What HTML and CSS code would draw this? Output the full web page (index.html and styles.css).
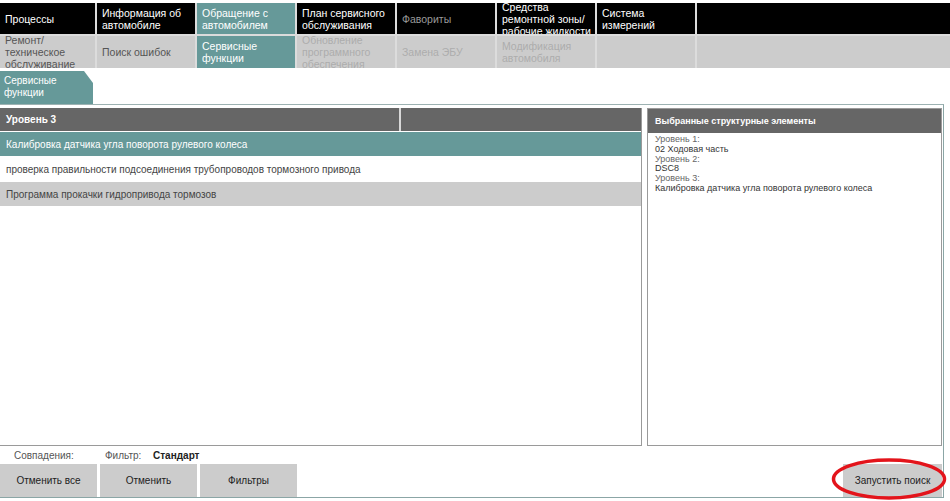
FILE: index.html
```html
<!DOCTYPE html>
<html lang="ru">
<head>
<meta charset="utf-8">
<title>Сервисные функции</title>
<link rel="stylesheet" href="styles.css">
</head>
<body>
<div class="nav">
  <div class="cell top">Процессы</div>
  <div class="cell top">Информация об автомобиле</div>
  <div class="cell top active">Обращение с автомобилем</div>
  <div class="cell top">План сервисного обслуживания</div>
  <div class="cell top muted">Фавориты</div>
  <div class="cell top lines">Средства<br>ремонтной зоны/<br>рабочие жидкости</div>
  <div class="cell top">Система измерений</div>
  <div class="cell top"></div>

  <div class="cell sub">Ремонт/ техническое обслуживание</div>
  <div class="cell sub">Поиск ошибок</div>
  <div class="cell sub active">Сервисные функции</div>
  <div class="cell sub off">Обновление программного обеспечения</div>
  <div class="cell sub off">Замена ЭБУ</div>
  <div class="cell sub off">Модификация автомобиля</div>
  <div class="cell sub"></div>
  <div class="cell sub"></div>
</div>

<div class="tabs">
  <div class="tab">Сервисные<br>функции</div>
</div>

<div class="frame">
  <div class="panels">
    <div class="left">
      <div class="thead">
        <div class="th">Уровень 3</div>
        <div class="th"></div>
      </div>
      <div class="row sel">Калибровка датчика угла поворота рулевого колеса</div>
      <div class="row">проверка правильности подсоединения трубопроводов тормозного привода</div>
      <div class="row alt">Программа прокачки гидропривода тормозов</div>
    </div>
    <div class="right">
      <div class="rhead">Выбранные структурные элементы</div>
      <div class="rbody">
        <div class="lbl">Уровень 1:</div>
        <div class="val">02 Ходовая часть</div>
        <div class="lbl">Уровень 2:</div>
        <div class="val">DSC8</div>
        <div class="lbl">Уровень 3:</div>
        <div class="val">Калибровка датчика угла поворота рулевого колеса</div>
      </div>
    </div>
  </div>
  <div class="status">
    <span class="matches">Совпадения:</span>
    <span class="flabel">Фильтр:</span>
    <span class="fvalue">Стандарт</span>
  </div>
  <div class="actions">
    <button class="btn">Отменить все</button>
    <button class="btn">Отменить</button>
    <button class="btn">Фильтры</button>
    <button class="btn run">Запустить поиск</button>
  </div>
  <svg class="mark" width="118" height="44" viewBox="0 0 118 44">
    <ellipse cx="59" cy="22" rx="55.5" ry="19" fill="none" stroke="#e3141b" stroke-width="3.5"/>
  </svg>
</div>
</body>
</html>
```

FILE: styles.css
```css
* { box-sizing: border-box; }

body {
  margin: 0;
  width: 950px;
  height: 501px;
  overflow: hidden;
  background: #fff;
  font-family: "Liberation Sans", Arial, sans-serif;
  color: #444;
}

.nav {
  display: grid;
  grid-template-columns: 95px repeat(6, 98px) 1fr;
  grid-template-rows: 31px 32px;
  gap: 2px;
  margin-top: 3px;
  background: #dcdcdc;
}

.cell {
  display: flex;
  align-items: center;
  overflow: hidden;
  padding: 0 2px 0 5px;
  font-size: 10.5px;
  line-height: 12px;
}

.cell.lines {
  white-space: nowrap;
  padding-right: 0;
}

.cell.top { background: #000; color: #fff; }
.cell.top.muted { color: #9a9a9a; }
.cell.sub { background: #cccccc; color: #555; }
.cell.sub.off { color: #adadad; }
.cell.active { background: #669999; color: #fff; }

.tabs {
  display: flex;
  margin-top: 3px;
}

.tab {
  width: 93px;
  height: 33px;
  padding: 4px 4px 0;
  background: #669999;
  color: #fff;
  font-size: 10px;
  line-height: 12px;
  clip-path: polygon(0 0, 84px 0, 100% 12px, 100% 100%, 0 100%);
}

.frame {
  position: relative;
  width: 944px;
  border-top: 1px solid #9db2b2;
  border-right: 1px solid #8ba6a6;
  border-bottom: 1px solid #8ba6a6;
  padding: 3px 1px 0 0;
}

.panels {
  display: flex;
  gap: 5px;
  height: 338px;
}

.left {
  width: 642px;
  border-right: 1px solid #9a9a9a;
  border-bottom: 1px solid #9a9a9a;
}

.thead {
  display: grid;
  grid-template-columns: 399px 1fr;
  gap: 2px;
  height: 23px;
  background: #d8d8d8;
}

.th {
  display: flex;
  align-items: center;
  padding-left: 6px;
  background: #666;
  color: #fff;
  font-size: 10px;
  font-weight: bold;
}

.row {
  display: flex;
  align-items: center;
  height: 24px;
  margin-top: 1px;
  padding-left: 6px;
  font-size: 10px;
  color: #444;
  background: #fff;
}

.row.sel { background: #669999; color: #fff; }
.row.alt { background: #cccccc; }

.right {
  flex: 1;
  border: 1px solid #9a9a9a;
}

.rhead {
  display: flex;
  align-items: center;
  height: 24px;
  padding-left: 7px;
  background: #666;
  color: #fff;
  font-size: 9px;
  font-weight: bold;
}

.rbody {
  padding: 2px 7px;
  font-size: 9px;
  line-height: 9.8px;
}

.lbl { color: #666; }
.val { color: #333; }

.status {
  display: flex;
  align-items: center;
  height: 18px;
  padding-left: 14px;
  font-size: 10px;
  color: #555;
}

.matches { width: 91px; }
.flabel { width: 48px; }
.fvalue { color: #222; font-weight: bold; }

.actions {
  display: flex;
  gap: 3px;
  height: 33px;
}

.btn {
  width: 97px;
  height: 33px;
  border: 0;
  padding: 0;
  background: #cccccc;
  color: #222;
  font-family: "Liberation Sans", Arial, sans-serif;
  font-size: 10px;
}

.btn.run {
  width: 99px;
  margin-left: auto;
}

.mark {
  position: absolute;
  left: 830px;
  bottom: -4px;
}
```
